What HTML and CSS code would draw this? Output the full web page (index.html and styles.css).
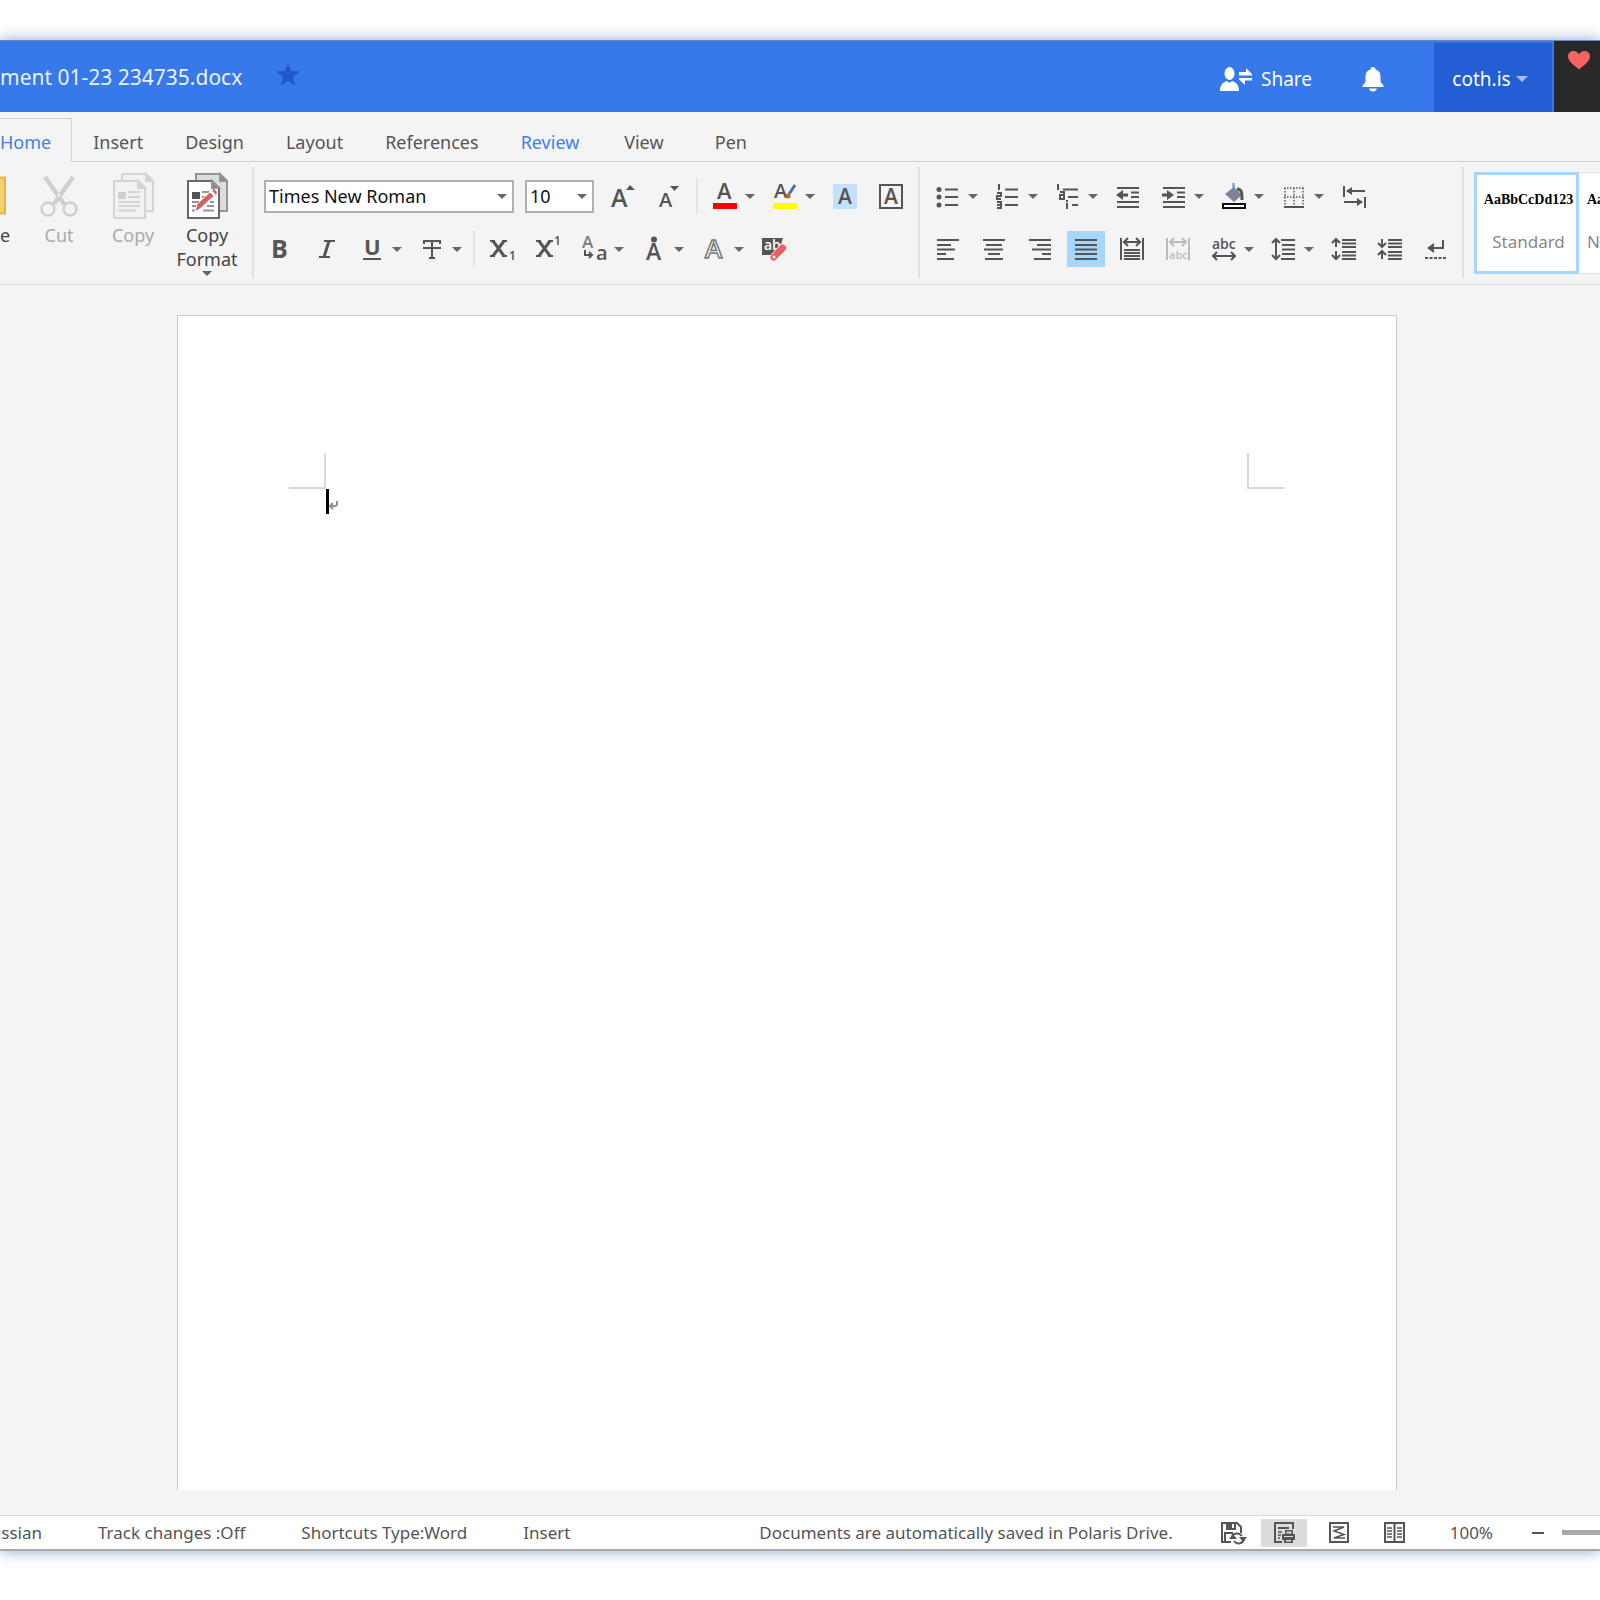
FILE: index.html
```
<!DOCTYPE html>
<html lang="en">
<head>
	<meta charset="utf-8">
	<title>Document 01-23 234735.docx</title>
	<meta name="viewport" content="width=device-width, initial-scale=1">
	<link rel="stylesheet" href="styles.css">
</head>
<body>
<div class="window">
	<header class="titlebar">
		<h1 class="title">ment 01-23 234735.docx</h1>
		<button class="bar-button star" aria-label="Favorite">
			<svg width="24" height="24" viewBox="0 0 24 24"><path fill="#2259c8" d="M12 0l3 8 9 .500-7 5.500 2.500 9L12 18l-7.500 5L7 14 0 8.500 9 8z"/></svg>
		</button>
		<button class="bar-button share">
			<svg width="34" height="26" viewBox="0 0 34 26" fill="#fff"><ellipse cx="10.500" cy="7.500" rx="5" ry="6.500"/><path d="M1 25c0-6 3-9 7-10l2.500 2 2.500-2c4 1 7 4 7 10zM20 6h7V2l6 6v1.500H20zM33 12v2.500h-7V19l-6-5.500V12z"/></svg>
			Share
		</button>
		<button class="bar-button bell" aria-label="Notifications">
			<svg width="22" height="26" viewBox="0 0 22 26" fill="#fff"><path d="M11 1c1.600 0 2.500 1 2.500 2.500 3.500 1 5 3.500 5 7V16l3 3.500V21H.500v-1.500l3-3.500v-5.500c0-3.500 1.500-6 5-7C8.500 2 9.400 1 11 1zM7 22.500h8c-.800 2-2 3-4 3s-3.200-1-4-3z"/></svg>
		</button>
		<button class="account">coth.is <span class="caret caret-light"></span></button>
		<button class="heart" aria-label="Support">
			<svg width="22" height="19" viewBox="0 0 22 19"><path fill="#f56464" d="M11 18.500C6 14 0 10.500 0 5.500 0 2 2.500 0 5.500 0 8 0 10 1.500 11 3.500 12 1.500 14 0 16.500 0 19.500 0 22 2 22 5.500c0 5-6 8.500-11 13z"/></svg>
		</button>
	</header>

	<nav class="tabs">
		<button class="tab active">Home</button>
		<button class="tab">Insert</button>
		<button class="tab">Design</button>
		<button class="tab">Layout</button>
		<button class="tab">References</button>
		<button class="tab review">Review</button>
		<button class="tab">View</button>
		<button class="tab">Pen</button>
	</nav>

	<div class="ribbon">
		<!-- clipboard -->
		<div class="clipboard">
			<button class="big paste">
				<svg width="8" height="48" viewBox="0 0 8 48"><path d="M-4 5.500h9v36h-9z" fill="#f8cd6c" stroke="#e3b548" stroke-width="2"/></svg>
				<span>e</span>
			</button>
			<button class="big" disabled>
				<svg width="40" height="48" viewBox="0 0 40 48" fill="none" stroke="#cfcfcf"><path d="M6 5l19 27M34 5L15 32" stroke-width="4.500"/><circle cx="9" cy="37" r="6.500" stroke-width="2.500"/><circle cx="31" cy="37" r="6.500" stroke-width="2.500"/><circle cx="20" cy="23" r="1.500" fill="#f4f4f4" stroke="none"/></svg>
				<span>Cut</span>
			</button>
			<button class="big" disabled>
				<svg width="42" height="48" viewBox="0 0 42 48" fill="#f2f2f2" stroke="#d4d4d4" stroke-width="2"><path d="M10 9V2h24l7 7v30h-7"/><path d="M34 2v7h7z" fill="#d4d4d4"/><path d="M2 9h24l7 7v30H2z"/><path d="M26 9v7h7z" fill="#d4d4d4"/><path d="M6 20h8v7H6z" fill="#cfcfcf" stroke="none"/><path d="M16 20h12M16 25h12M6 30h22M6 34h22M6 38.500h18"/></svg>
				<span>Copy</span>
			</button>
			<button class="big">
				<svg width="42" height="48" viewBox="0 0 42 48" fill="#ddd" stroke="#959595" stroke-width="2"><path d="M10 9V2h24l7 7v30h-7"/><path d="M34 2v7h7z" fill="#858585"/><path d="M2 9h24l7 7v30H2z" fill="#fff" stroke="#696969"/><path d="M26 9v7h7z" fill="#858585"/><path d="M6 20h8v7H6z" fill="#555" stroke="none"/><path d="M16 20h7M16 25h4M6 30h8M6 34h6M6 38.500h3M24 30h4M21 34h7M17 38.500h11"/><path d="M9 40l2-8 13-12 4 4-13 12z" fill="#d75f5f" stroke="#fff" stroke-width="1"/><path d="M26 18l2-1 3 3-1 3z" fill="#d75f5f" stroke="none"/></svg>
				<span>Copy<br>Format</span>
				<span class="caret"></span>
			</button>
		</div>

		<!-- font -->
		<div class="group">
			<div class="row">
				<label class="combo font-name"><select aria-label="Font"><option>Times New Roman</option></select></label>
				<label class="combo font-size"><select aria-label="Font size"><option>10</option></select></label>
				<button class="tool" aria-label="Grow font"><svg viewBox="0 0 26 26"><text x="1" y="24" font-size="25">A</text><path class="f" d="M16 7l4-5 5 5z"/></svg></button>
				<button class="tool" aria-label="Shrink font"><svg viewBox="0 0 26 26"><text x="3" y="24" font-size="20">A</text><path class="f" d="M14 3h9l-4.500 5z"/></svg></button>
				<span class="line"></span>
				<button class="tool drop" aria-label="Font color"><svg viewBox="0 0 26 26"><text x="5" y="16" font-size="22">A</text><path fill="#f00" d="M1 20h24v6H1z"/></svg><span class="caret"></span></button>
				<button class="tool drop" aria-label="Highlight"><svg viewBox="0 0 26 26"><text x="2" y="15" font-size="20">A</text><path d="M17 11l6-9" stroke="#4471b5" stroke-width="3"/><circle cx="16" cy="13" r="2.500" fill="#c7612d"/><path fill="#ff0" d="M1 20h24v6H1z"/></svg><span class="caret"></span></button>
				<button class="tool" aria-label="Shading"><svg viewBox="0 0 26 26"><path fill="#c3e0fd" d="M1 1h24v25H1z"/><text x="6" y="21" font-size="21">A</text></svg></button>
				<button class="tool" aria-label="Character border"><svg viewBox="0 0 26 26"><path class="s" d="M2 2h22v23H2z"/><text x="6" y="21" font-size="21">A</text></svg></button>
			</div>
			<div class="row">
				<button class="tool" aria-label="Bold"><svg viewBox="0 0 26 26"><text x="4" y="22" font-size="25" font-weight="700">B</text></svg></button>
				<button class="tool" aria-label="Italic"><svg viewBox="0 0 26 26"><path class="s bold" d="M16 5l-5 16"/><path class="s" d="M11 5h11M6 21h11"/></svg></button>
				<button class="tool drop" aria-label="Underline"><svg viewBox="0 0 26 26"><text x="5" y="19" font-size="22" font-weight="700">U</text><path class="s" d="M4 23h18"/></svg><span class="caret"></span></button>
				<button class="tool drop" aria-label="Strikethrough"><svg viewBox="0 0 26 26"><path class="s" d="M5 8V5h16v3M13 5v17M10 22h6M4 12h18"/></svg><span class="caret"></span></button>
				<span class="line"></span>
				<button class="tool" aria-label="Subscript"><svg viewBox="0 0 26 26"><path class="s" d="M1 5h5M13 5h5M1 20h5M13 20h5"/><path class="s bold" d="M4 5l11 15M15 5L4 20"/><text x="20" y="24" font-size="12">1</text></svg></button>
				<button class="tool" aria-label="Superscript"><svg viewBox="0 0 26 26"><path class="s" d="M1 5h5M13 5h5M1 20h5M13 20h5"/><path class="s bold" d="M4 5l11 15M15 5L4 20"/><text x="19" y="9" font-size="12">1</text></svg></button>
				<button class="tool drop" aria-label="Change case"><svg viewBox="0 0 26 26"><text x="1" y="12" font-size="17" opacity=".75">A</text><path class="s" d="M4 14v5h7M8 16l3 3-3 3"/><text x="15" y="24" font-size="20">a</text></svg><span class="caret"></span></button>
				<button class="tool drop" aria-label="Emphasis mark"><svg viewBox="0 0 26 26"><circle class="f" cx="13" cy="3.500" r="3"/><text x="5" y="24" font-size="23">A</text></svg><span class="caret"></span></button>
				<button class="tool drop" aria-label="Text effects"><svg viewBox="0 0 26 26"><text x="4" y="22" font-size="26" class="outline">A</text></svg><span class="caret"></span></button>
				<button class="tool" aria-label="Clear formatting"><svg viewBox="0 0 26 26"><path class="f" d="M1 2h21l-5 17H1z"/><text x="3" y="14" font-size="14" class="white">ab</text><path d="M9 20L20 8q2-1 4 1l1 1q2 2 0 4L14 25q-2 1-4-1-2-2-1-4z" fill="#e96060" stroke="#f4f4f4"/><circle cx="13" cy="21" r="1.500" fill="#fff"/></svg></button>
			</div>
		</div>

		<!-- paragraph -->
		<div class="group paragraph">
			<div class="row">
				<button class="tool drop" aria-label="Bullets"><svg viewBox="0 0 26 26"><circle class="f" cx="4" cy="6.500" r="2.500"/><circle class="f" cx="4" cy="14" r="2.500"/><circle class="f" cx="4" cy="22" r="2.500"/><path class="s" d="M10 6.500h13M10 14h13M10 22h13"/></svg><span class="caret"></span></button>
				<button class="tool drop" aria-label="Numbering"><svg viewBox="0 0 26 26"><path class="s" d="M4 1v6M2 10h4v3H2v3h4M2 19h4v6H2M2 22h4"/><path class="s" d="M10 6.500h13M10 14h13M10 22h13"/></svg><span class="caret"></span></button>
				<button class="tool drop" aria-label="Multilevel list"><svg viewBox="0 0 26 26"><path class="s" d="M3 1v6M5 9h4v7H5v-4h4M12 17v2M12 20v6"/><path class="s" d="M8 6.500h15M13 14h10M17 22h6"/></svg><span class="caret"></span></button>
				<button class="tool" aria-label="Decrease indent"><svg viewBox="0 0 26 26"><path class="s" d="M2 5h22M16 9.500h8M16 14h8M2 19h22M2 24h22"/><path class="s bold" d="M5 12h8"/><path class="f" d="M1 12l7-5v10z"/></svg></button>
				<button class="tool drop" aria-label="Increase indent"><svg viewBox="0 0 26 26"><path class="s" d="M2 5h22M16 9.500h8M16 14h8M2 19h22M2 24h22"/><path class="s bold" d="M1 12h8"/><path class="f" d="M13 12L6 7v10z"/></svg><span class="caret"></span></button>
				<button class="tool drop" aria-label="Fill color"><svg viewBox="0 0 26 26"><path d="M4 11l9-7 8 8-8 7z" fill="#7d8592"/><path class="s bold" d="M16 6c5 0 5 4 5 11"/><path d="M12.500 0v8" stroke="#5f8fc4" stroke-width="2"/><path d="M2 21h22v4H2z" fill="#fff" stroke="#111" stroke-width="2"/></svg><span class="caret"></span></button>
				<button class="tool drop" aria-label="Borders"><svg viewBox="0 0 26 26"><path class="s dots" d="M3 5h20M3 14h20M4 5v17M13 5v17M22 5v17"/><path class="s" d="M3 24h20"/></svg><span class="caret"></span></button>
				<button class="tool" aria-label="Tabs"><svg viewBox="0 0 26 26"><path class="s" d="M3 3v11M6 8h18M3 19h18M24 14v11"/><path class="f" d="M5 8l6-4v8zM22 19l-6-4v8z"/></svg></button>
			</div>
			<div class="row">
				<button class="tool" aria-label="Align left"><svg viewBox="0 0 26 26"><path class="s" d="M2 4h22M2 9h14M2 13.500h18M2 18h9M2 23h17"/></svg></button>
				<button class="tool" aria-label="Align center"><svg viewBox="0 0 26 26"><path class="s" d="M2 4h22M5 9h16M3 13.500h19M7 18h12M4 23h18"/></svg></button>
				<button class="tool" aria-label="Align right"><svg viewBox="0 0 26 26"><path class="s" d="M2 4h22M10 9h14M5 13.500h19M15 18h9M7 23h17"/></svg></button>
				<button class="tool selected" aria-label="Justify"><svg viewBox="0 0 26 26"><path class="s" d="M2 4h22M2 9h22M2 13.500h22M2 18h22M2 23h22"/></svg></button>
				<button class="tool" aria-label="Distribute"><svg viewBox="0 0 26 26"><path class="s" d="M2 2v22M24 2v22M5 6h16M9 2L5 6l4 4M17 2l4 4-4 4M5 14h16M5 17h16M5 20h16M5 23h16"/></svg></button>
				<button class="tool" aria-label="Fit text" disabled><svg viewBox="0 0 26 26"><path class="s" d="M2 2v22M24 2v22M5 6h16M9 2L5 6l4 4M17 2l4 4-4 4"/><text x="4" y="23" font-size="11">abc</text></svg></button>
				<button class="tool drop" aria-label="Character scaling"><svg viewBox="0 0 26 26"><text x="1" y="13" font-size="14">abc</text><path class="s" d="M2 20h22M6 16l-4 4 4 4M20 16l4 4-4 4"/></svg><span class="caret"></span></button>
				<button class="tool drop" aria-label="Line spacing"><svg viewBox="0 0 26 26"><path class="s" d="M5 3v20M1 7l4-4 4 4M1 19l4 4 4-4M10 4h14M11 9h13M11 13.500h13M11 18h13M10 23h14"/></svg><span class="caret"></span></button>
				<button class="tool" aria-label="Increase spacing"><svg viewBox="0 0 26 26"><path class="s" d="M5 3v8M1 7l4-4 4 4M5 15v8M1 19l4 4 4-4M11 4h14M11 7.500h14M11 11h14M11 16h14M11 19.500h14M11 23h14"/></svg></button>
				<button class="tool" aria-label="Decrease spacing"><svg viewBox="0 0 26 26"><path class="s" d="M5 3v8M1 7l4 4 4-4M5 15v8M1 19l4-4 4 4M11 4h14M11 7.500h14M11 11h14M11 16h14M11 19.500h14M11 23h14"/></svg></button>
				<button class="tool" aria-label="Line break"><svg viewBox="0 0 26 26"><path class="s" d="M20 4v8H8"/><path class="f" d="M4 12l7-5v10z"/><path class="s" stroke-dasharray="3 1.500" d="M2 22h22"/></svg></button>
			</div>
		</div>

		<div class="styles">
			<button class="style-card chosen"><span class="sample">AaBbCcDd123</span><span>Standard</span></button>
			<button class="style-card"><span class="sample">Aa</span><span>N</span></button>
		</div>
	</div>

	<main class="workspace">
		<div class="page">
			<div class="margins"><span class="corner left"></span><span class="corner right"></span></div>
			<div class="typing">
				<span class="cursor"></span>
				<svg width="10" height="24" viewBox="0 0 10 24" fill="none" stroke="#909090" stroke-width="2"><path d="M8 12v3q0 2-2 2H2M4 14l-3 3 3 3"/></svg>
			</div>
		</div>
	</main>

	<footer class="statusbar">
		<span class="lang">ussian</span>
		<span>Track changes :Off</span>
		<span>Shortcuts Type:Word</span>
		<span>Insert</span>
		<span class="saved">Documents are automatically saved in Polaris Drive.</span>
		<div class="views">
			<button class="save" aria-label="Save"><svg viewBox="0 0 26 24"><path class="s" d="M11 21H2V2h15l4 4v6M5 21v-9h8"/><path class="f" d="M6 2h10v7H6z"/><path fill="#fff" d="M12 3h2v4h-2z"/><path class="s" d="M12 16c1-4 7-5 10-1M24 18c-1 5-7 6-10 2"/><path class="f" d="M9 18l4-5 4 5zM19 16h8l-4 5z"/></svg></button>
			<button class="current" aria-label="Print layout"><svg viewBox="0 0 26 24"><path class="s" d="M11 21H4V2h18v6M7 7h11"/><path class="s fine" d="M7 11h4M7 14h3M7 17h2"/><path class="f" d="M14 9h8v4h2v6h-2v3h-9v-3h-2v-6h3z"/><path d="M15.500 10.500h5v2h-5zM13 15h9v1h-9zM15 19h5v1.500h-5z" fill="#dcdcdc"/></svg></button>
			<button aria-label="Web layout"><svg viewBox="0 0 26 24"><path class="s" d="M4 2h18v19H4z"/><path class="s fine" d="M7 6h11L8 10l10 3.500L8 17h11"/></svg></button>
			<button aria-label="Reading view"><svg viewBox="0 0 26 24"><path class="s" d="M4 2h19v19H4zM13.500 2v19"/><path class="s fine" d="M6 7h5M6 10h5M6 13h5M6 16h5M16 7h5M16 10h5M16 13h5M16 16h5"/></svg></button>
		</div>
		<span class="percent">100%</span>
		<button class="minus" aria-label="Zoom out"></button>
		<span class="track"></span>
	</footer>
</div>
</body>
</html>
```
FILE: styles.css
```
* {
    box-sizing: border-box;
}
body {
    margin: 0;
    height: 100vh;
    padding: 40px 0 49px;
    background: #fff;
    color: #555;
    font-family: "Noto Sans", sans-serif;
    font-size: 18px;
    overflow: hidden;
}
button {
    border: none;
    background: none;
    padding: 0;
    margin: 0;
    font: inherit;
    color: inherit;
    cursor: pointer;
}
svg {
    display: block;
    flex-shrink: 0;
}
.window {
    height: 100%;
    display: flex;
    flex-direction: column;
    background: #f4f4f4;
    border-top: 1px solid #6b86c0;
    border-bottom: 2px solid #a9a9a9;
    box-shadow: 0 0 14px #8ca4d0;
}

/* title bar */
.titlebar {
    display: flex;
    align-items: center;
    height: 71px;
    background: #3778ea;
    color: #fff;
    overflow: hidden;
    flex-shrink: 0;
}
.title {
    margin: 0 34px 0 0;
    font-size: 21px;
    font-weight: 400;
    color: #e9f1ff;
    white-space: nowrap;
}
.bar-button {
    display: flex;
    align-items: center;
    gap: 8px;
    padding-top: 4px;
    font-size: 19px;
}
.star {
    padding: 0 0 4px;
}
.share {
    margin-left: auto;
}
.bell {
    margin: 0 50px;
}
.account {
    display: flex;
    align-items: center;
    justify-content: center;
    gap: 5px;
    width: 118px;
    height: 69px;
    padding: 2px 6px 0 0;
    align-self: flex-end;
    background: #235ed5;
    font-size: 19px;
}
.heart {
    width: 46px;
    align-self: stretch;
    margin-left: 2px;
    padding: 10px 14px;
    display: flex;
    background: #282828;
}
.caret {
    width: 0;
    height: 0;
    border: 5px solid transparent;
    border-top-color: #666;
    border-bottom: none;
}
.caret-light {
    border-width: 6px;
    border-top-color: #a3bff0;
    border-bottom: none;
}

/* tabs */
.tabs {
    display: flex;
    height: 50px;
    padding-top: 6px;
    border-bottom: 1px solid #d0d0d0;
    flex-shrink: 0;
}
.tab {
    height: 44px;
    min-width: 87px;
    padding: 4px 21px 0;
    font-size: 18px;
}
.tab.active {
    min-width: 0;
    padding: 3px 20px 0 0;
    color: #3f80ea;
    background: #f4f4f4;
    border-top: 1px solid #d0d0d0;
    border-right: 1px solid #d0d0d0;
}
.review {
    color: #3f80ea;
}

/* ribbon */
.ribbon {
    display: flex;
    height: 123px;
    border-bottom: 1px solid #d8d8d8;
    flex-shrink: 0;
    overflow: hidden;
}
.clipboard {
    display: flex;
    width: 254px;
    margin: 5px 0 6px;
    padding-top: 5px;
    border-right: 2px solid #e0e0e0;
}
.big {
    display: flex;
    flex-direction: column;
    align-items: center;
    width: 74px;
    font-size: 18px;
    line-height: 24px;
    color: #444;
}
.big span:not(.caret) {
    margin-top: 3px;
}
.big:disabled {
    color: #aaa;
}
.paste {
    width: 22px;
    align-items: flex-start;
}
.group {
    display: flex;
    flex-direction: column;
    gap: 17px;
    padding: 16px 5px 0 3px;
}
.paragraph {
    padding: 16px 3px 0 6px;
    position: relative;
}
.paragraph::before, .styles::before {
    content: "";
    position: absolute;
    left: -1px;
    top: 5px;
    width: 2px;
    height: 111px;
    background: #e0e0e0;
}
.row {
    display: flex;
    height: 36px;
}
.combo {
    position: relative;
    align-self: center;
    height: 33px;
}
.combo::after {
    content: "";
    position: absolute;
    right: 7px;
    top: 14px;
    border: 5px solid transparent;
    border-top-color: #666;
    border-bottom: none;
    pointer-events: none;
}
.combo select {
    appearance: none;
    width: 100%;
    height: 33px;
    padding: 0 3px;
    border: 2px solid #b0b0b0;
    border-radius: 0;
    background: #fff;
    color: #111;
    font: 18px "Noto Sans", sans-serif;
}
.font-name {
    width: 250px;
    margin: 0 11px 0 7px;
}
.font-size {
    width: 69px;
    margin-right: 6px;
}
.line {
    width: 2px;
    margin: 0 4px;
    background: #e3e3e3;
}
.tool {
    display: flex;
    align-items: center;
    gap: 7px;
    width: 46px;
    padding: 0 10px;
}
.tool svg, .views svg {
    width: 26px;
    overflow: visible;
    font-family: "Open Sans", sans-serif;
    font-weight: 600;
    fill: #555;
}
.tool svg {
    height: 26px;
}
.tool:disabled {
    opacity: .35;
}
.drop {
    width: 60px;
}
.selected {
    width: 38px;
    margin: 0 4px;
    padding: 0 6px;
    background: #a5d6ff;
}
.s {
    fill: none;
    stroke: #555;
    stroke-width: 2;
}
.bold {
    stroke-width: 3;
}
.fine {
    stroke-width: 1.5;
}
.dots {
    stroke-width: 1.5;
    stroke-dasharray: 1.5;
}
.f {
    fill: #555;
}
.outline {
    fill: #fff;
    stroke: #777;
    stroke-width: 1.5;
}
.white {
    fill: #fff;
}
.styles {
    position: relative;
    flex: 1;
    display: flex;
    padding: 10px 0 10px 12px;
    overflow: hidden;
}
.styles::before {
    left: 0;
}
.style-card {
    display: flex;
    flex-direction: column;
    align-items: flex-start;
    width: 105px;
    height: 102px;
    padding: 14px 0 0 8px;
    flex-shrink: 0;
    background: #fff;
    border: 1px solid #e3e3e3;
    border-left: none;
    color: #888;
    white-space: nowrap;
    font-size: 17px;
}
.style-card.chosen {
    border: 3px solid #a5d6ff;
    padding: 12px 0 0 4px;
    align-items: center;
}
.sample {
    margin-bottom: 17px;
    color: #000;
    font: bold 14px/26px "Liberation Serif", serif;
}

/* document */
.workspace {
    flex: 1;
    display: flex;
    padding: 30px 203px 25px 177px;
}
.page {
    flex: 1;
    padding: 137px 111px 0;
    background: #fff;
    border: 1px solid #c8c8c8;
    border-bottom: none;
}
.margins {
    display: flex;
    justify-content: space-between;
}
.corner {
    width: 37px;
    height: 36px;
    border-bottom: 2px solid #dadada;
}
.corner.left {
    border-right: 2px solid #dadada;
}
.corner.right {
    width: 38px;
    border-left: 2px solid #dadada;
}
.typing {
    display: flex;
    padding-left: 37px;
}
.cursor {
    width: 3px;
    height: 25px;
    background: #000;
}

/* status bar */
.statusbar {
    display: flex;
    align-items: center;
    height: 34px;
    background: #fff;
    border-top: 1px solid #d8d8d8;
    font-size: 17px;
    white-space: nowrap;
    overflow: hidden;
    flex-shrink: 0;
}
.statusbar > span {
    margin-right: 56px;
}
.statusbar .lang {
    display: flex;
    justify-content: flex-end;
    width: 42px;
    overflow: hidden;
}
.statusbar .saved {
    margin: 0 37px 0 auto;
}
.views {
    display: flex;
    gap: 9px;
}
.views button {
    width: 46px;
    height: 28px;
    padding: 2px 10px;
}
.views .save {
    width: 42px;
}
.views svg {
    height: 24px;
}
.views .current {
    background: #dcdcdc;
}
.statusbar .percent {
    margin: 0 39px 0 33px;
}
.minus {
    width: 12px;
    height: 2px;
    background: #555;
}
.statusbar .track {
    width: 38px;
    height: 5px;
    margin: 0 0 0 18px;
    background: #aaa;
}
```
